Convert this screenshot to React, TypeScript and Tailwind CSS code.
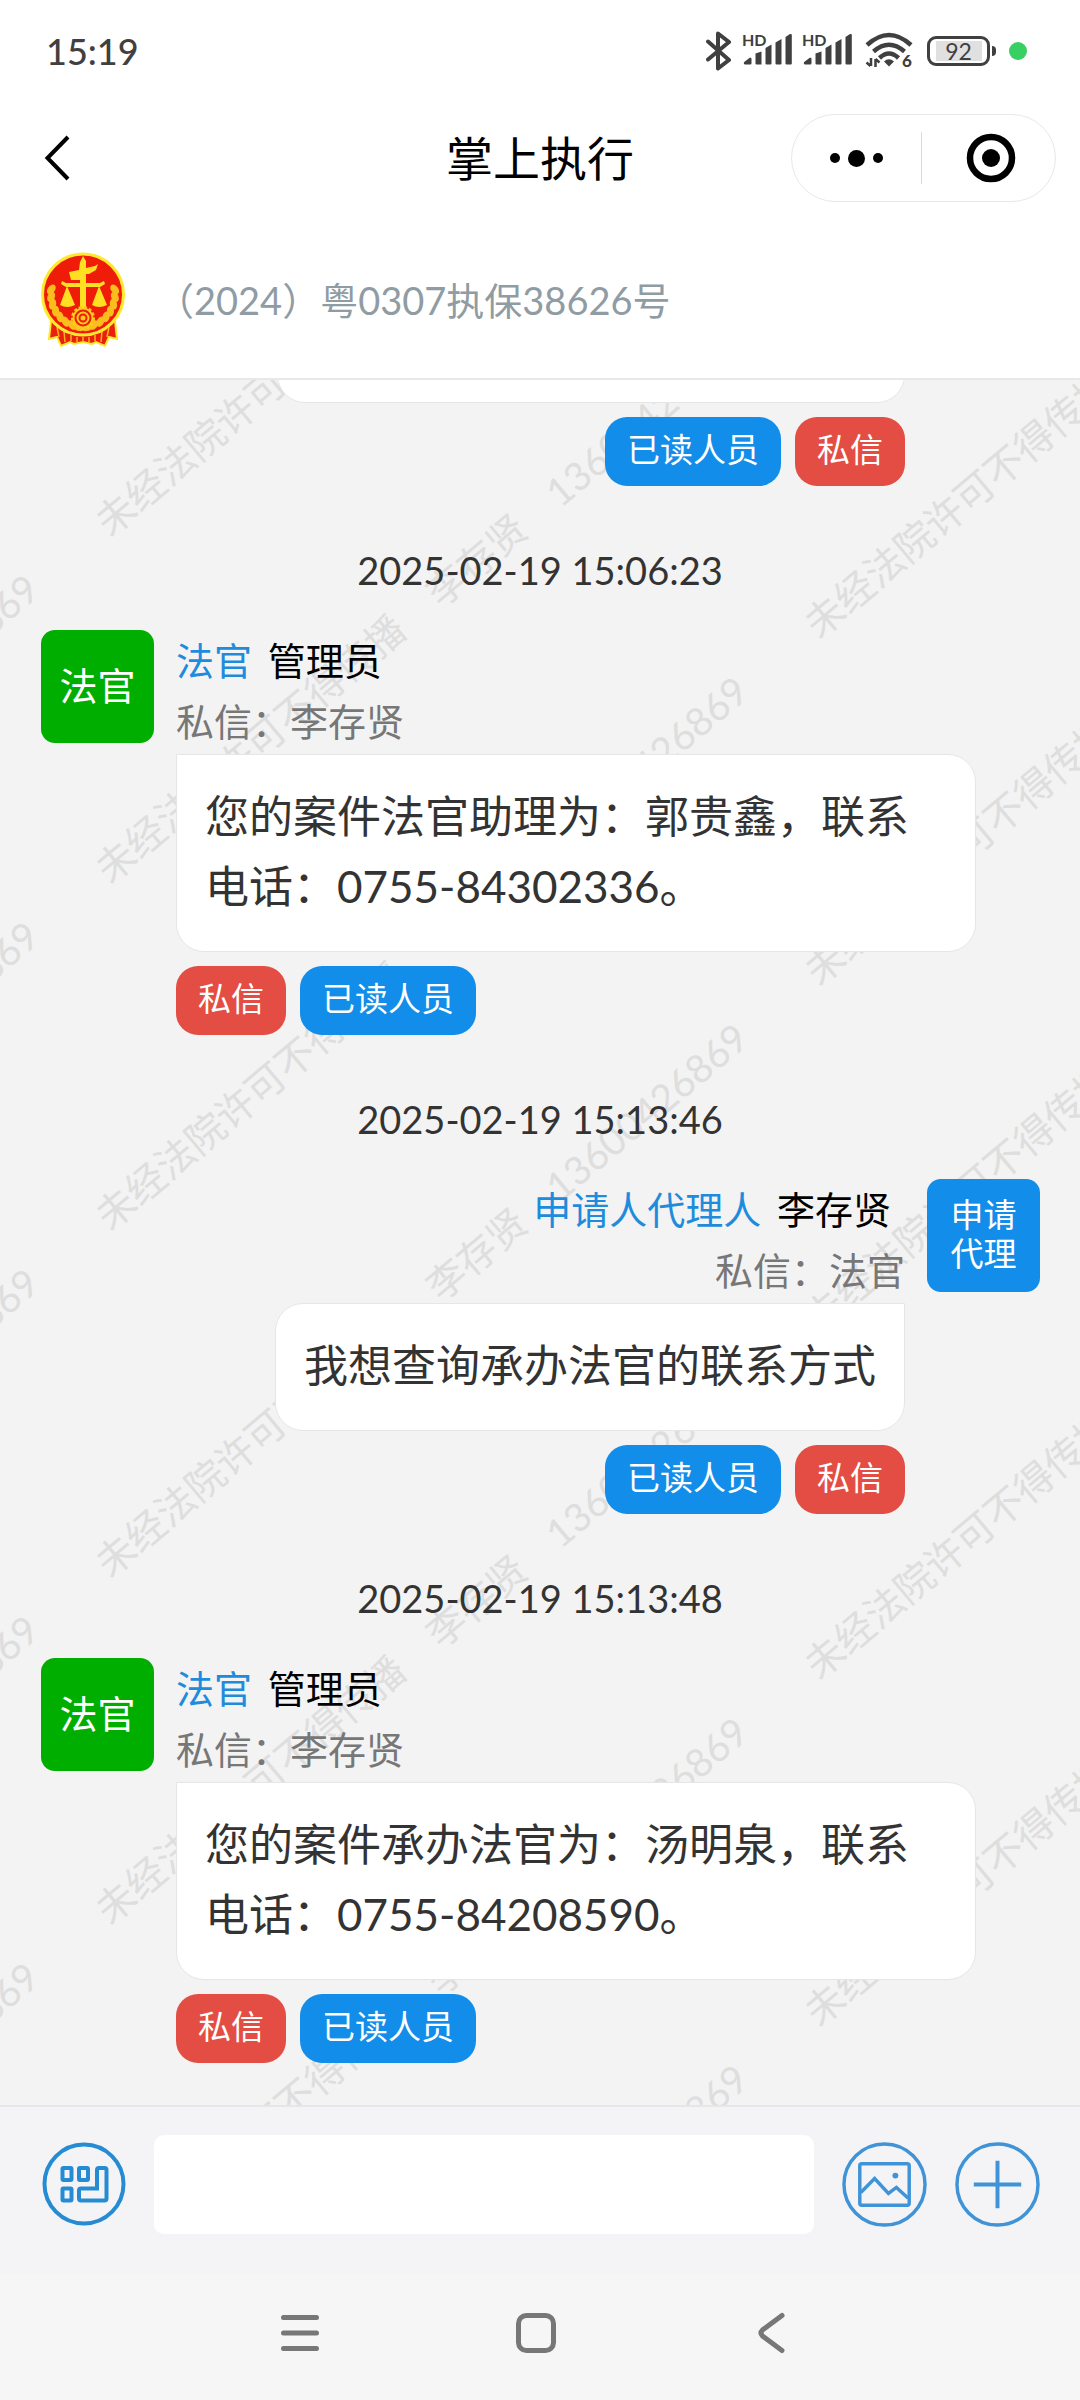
import React from "react";

const FONT = "font-['Lato','Noto_Sans_CJK_SC',sans-serif]";

const WATERMARKS = [
  { text: "未经法院许可不得传播", x: 110, y: 158, columns: [0, 1] },
  { text: "李存贤　13600426869", x: 441, y: 229, columns: [-1, 0] },
].flatMap(({ text, x, y, columns }) =>
  columns.flatMap((column) =>
    Array.from({ length: 8 }, (_, i) => ({
      text,
      x: x + column * 709,
      y: y + column * 102 + (i - 1) * 347,
    })).filter((mark) => mark.y > 0 && mark.y < 2000),
  ),
);

function Watermark() {
  return (
    <svg aria-hidden="true" className="pointer-events-none absolute inset-0 h-full w-full" fill="#dedede" fontSize="39">
      {WATERMARKS.map(({ text, x, y }) => (
        <text key={`${x}:${y}`} transform={`translate(${x} ${y}) rotate(-40)`}>{text}</text>
      ))}
    </svg>
  );
}

function Signal() {
  return (
    <svg viewBox="0 0 52 40" className="h-10 w-[52px]" fill="#404040">
      <text x="0" y="15" fontSize="16" fontWeight="700" fontFamily="Lato">HD</text>
      <path d="M3 33.500a1.500 1.500 0 0 1-.8-2.500l5.500-4.200a1.200 1.200 0 0 1 1.800 1v4.500a1.200 1.200 0 0 1-1.200 1.200z" />
      <path d="M13.500 22.500l6-2v13h-5a1 1 0 0 1-1-1z" />
      <path d="M23.500 17l6-3.500v19a1 1 0 0 1-1 1h-4a1 1 0 0 1-1-1z" />
      <path d="M33.500 11.500l6-3.500v24.500a1 1 0 0 1-1 1h-4a1 1 0 0 1-1-1z" />
      <path d="M43.500 6l4.500-3q1.800-.5 1.800 1v28.500a1 1 0 0 1-1 1h-4.300a1 1 0 0 1-1-1z" />
    </svg>
  );
}

function StatusBar() {
  return (
    <div className="flex h-[104px] items-center justify-between pr-[53px] pb-[2px] pl-[46px] text-[#404040]">
      <span className="text-[36px] leading-[40px] font-medium">15:19</span>
      <div className="flex items-center">
        <svg viewBox="0 0 26 40" className="mr-[10px] h-10 w-[26px]" fill="none" stroke="#404040" strokeWidth="4" strokeLinecap="round" strokeLinejoin="round">
          <path d="M2 10.500l21 18.500-11 8.500v-35l11 8.500L2 28.500" />
        </svg>
        <Signal />
        <span className="w-2" />
        <Signal />
        <svg viewBox="0 0 48 40" className="ml-[11px] h-10 w-12" fill="none" stroke="#404040" strokeWidth="4.500">
          <path d="M2 14q22-20 44 0" />
          <path d="M8.500 20.500q15.500-13.500 31 0" />
          <path d="M14.500 27q9.500-9 19 0" />
          <path d="M24 35.500l-5-5q5-4.500 10 0z" fill="#404040" stroke="none" />
          <path d="M6 27v8M1.500 31.500l4 3.500M10.500 36v-8M10.500 28l4 3.500" strokeWidth="2.500" />
          <text x="37" y="36" fontSize="17" fontWeight="900" fontFamily="Lato" fill="#404040" stroke="none">6</text>
        </svg>
        <div className="ml-[14px] flex items-center gap-[2px]">
          <div className="flex h-[30px] w-[63px] items-center justify-center rounded-[9px] border-[3px] border-[#404040]">
            <span className="h-[20px] w-[46px] bg-[#e0e0e0] text-center text-[23px] leading-[20px]">92</span>
          </div>
          <div className="h-[10px] w-1 rounded-r bg-[#404040]" />
        </div>
        <span className="ml-[13px] h-[18px] w-[18px] rounded-full bg-[#38cf63]" />
      </div>
    </div>
  );
}

function TitleBar() {
  return (
    <div className="grid h-[108px] grid-cols-[1fr_auto_1fr] items-center px-6">
      <button type="button" aria-label="返回" className="ml-4 h-12 w-8">
        <svg viewBox="0 0 32 48" className="h-12 w-8" fill="none" stroke="#000" strokeWidth="4">
          <path d="M28 3L7.500 24 28 45" />
        </svg>
      </button>
      <h1 className="text-[47px] leading-[60px] text-black">掌上执行</h1>
      <div className="flex h-[88px] w-[265px] items-center justify-self-end rounded-full border border-[#e8e8e8]">
        <button type="button" aria-label="更多" className="flex h-full flex-1 items-center justify-center gap-2">
          <span className="h-[10px] w-[10px] rounded-full bg-black" />
          <span className="h-[17px] w-[17px] rounded-full bg-black" />
          <span className="h-[10px] w-[10px] rounded-full bg-black" />
        </button>
        <span className="h-[52px] w-px bg-[#dadada]" />
        <button type="button" aria-label="关闭" className="flex h-full flex-1 items-center justify-center pl-1">
          <svg viewBox="0 0 50 50" className="h-[50px] w-[50px]">
            <circle cx="25" cy="25" r="21" fill="none" stroke="#000" strokeWidth="6.500" />
            <circle cx="25" cy="25" r="9" />
          </svg>
        </button>
      </div>
    </div>
  );
}

const GRAINS = Array.from({ length: 9 }, (_, i) => {
  const angle = 188 - i * 13;
  const a = (angle * Math.PI) / 180;
  return { x: 43 + 32 * Math.cos(a), y: 43 + 33 * Math.sin(a), angle };
});

function Emblem() {
  return (
    <svg viewBox="0 0 86 98" className="h-[98px] w-[86px]" role="img" aria-label="法院徽章">
      <path d="M11 70L9 88l8-2 4 9 9-4 4 2 9-2 9 2 4-2 9 4 4-9 8 2-2-18z" fill="#e8200c" stroke="#ffe92e" strokeWidth="2" />
      <path d="M17 76l2 10M24 80l1 11M31 84v6M37 86v5M43 86v5M49 86v5M55 84v6M62 80l-1 11M69 76l-2 10" stroke="#ffb020" strokeWidth="1.500" />
      <circle cx="43" cy="43.500" r="40.500" fill="#ee1c08" stroke="#ffe92e" strokeWidth="3" />
      <g fill="#f9bd1e">
        {GRAINS.map((g) => (
          <g key={g.angle}>
            <ellipse cx={g.x} cy={g.y} rx="5.500" ry="3.600" transform={`rotate(${g.angle - 60} ${g.x} ${g.y})`} />
            <ellipse cx={86 - g.x} cy={g.y} rx="5.500" ry="3.600" transform={`rotate(${240 - g.angle} ${86 - g.x} ${g.y})`} />
          </g>
        ))}
      </g>
      <g fill="#ffdf22">
        <path d="M40 62V29H31l-2-8 10-2 1-8 3-6 3 5v7l9-2 3-2-2 6-7 4h-3v39z" />
        <path d="M22 30l4 2h34l4-2 1 3-5 3H26l-5-3z" />
        <path d="M27 35l8 19q-8 4-15 0zM59 35l8 19q-8 4-15 0z" />
      </g>
      <circle cx="43" cy="67" r="10.500" fill="#ffcb1e" stroke="#ffcb1e" strokeWidth="3" strokeDasharray="3 2" />
      <circle cx="43" cy="67" r="7.500" fill="none" stroke="#ee1c08" strokeWidth="2" />
      <circle cx="43" cy="67" r="3.500" fill="none" stroke="#ee1c08" strokeWidth="2" />
    </svg>
  );
}

function PrivateButton() {
  return (
    <button type="button" className="h-[69px] rounded-[22px] bg-[#e34d43] px-[22px] pb-1 text-[33px] text-white">私信</button>
  );
}

function ReadersButton() {
  return (
    <button type="button" className="h-[69px] rounded-[22px] bg-[#128de9] px-[22px] pb-1 text-[33px] text-white">已读人员</button>
  );
}

function Stamp({ children }: { children: string }) {
  return (
    <time className="mt-[54px] mb-[30px] block text-center text-[38px] leading-[60px] text-[#333]">{children}</time>
  );
}

function JudgeMessage({ children }: { children: string }) {
  return (
    <article className="flex items-start gap-[22px] pr-[104px] pl-[41px]">
      <div className="flex h-[113px] w-[113px] shrink-0 items-center justify-center rounded-[14px] bg-[#00ae00] pb-[2px] text-[38px] text-white">法官</div>
      <div className="min-w-0">
        <p className="text-[38px] leading-[60px] text-black"><span className="text-[#1f8bdc]">法官</span> <span className="ml-[6px]">管理员</span></p>
        <p className="text-[38px] leading-[62px] text-[#777]">私信：李存贤</p>
        <div className="mt-[2px] rounded-[28px] rounded-tl-none border border-[#e6e6e6] bg-white px-7 pt-[26px] pb-[30px] text-[44px] leading-[70px] text-[#333]">{children}</div>
        <div className="mt-[14px] flex gap-[14px]">
          <PrivateButton />
          <ReadersButton />
        </div>
      </div>
    </article>
  );
}

function AgentMessage({ children }: { children: string }) {
  return (
    <article className="flex items-start justify-end gap-[22px] pr-[40px] pl-[104px]">
      <div className="flex min-w-0 flex-col items-end">
        <p className="mr-[14px] text-[38px] leading-[60px] text-black"><span className="text-[#1f8bdc]">申请人代理人</span> <span className="ml-[6px]">李存贤</span></p>
        <p className="text-[38px] leading-[62px] text-[#777]">私信：法官</p>
        <div className="mt-[2px] rounded-[28px] rounded-tr-none border border-[#e6e6e6] bg-white px-7 pt-[26px] pb-[30px] text-[44px] leading-[70px] text-[#333]">{children}</div>
        <div className="mt-[14px] flex gap-[14px]">
          <ReadersButton />
          <PrivateButton />
        </div>
      </div>
      <div className="flex h-[113px] w-[113px] shrink-0 items-center justify-center rounded-[14px] bg-[#128de9] pb-1 text-center text-[33px] leading-[39px] text-white">申请<br />代理</div>
    </article>
  );
}

export default function App() {
  return (
    <div className={`flex h-screen flex-col overflow-hidden bg-white ${FONT}`}>
      <header className="shrink-0 border-b-2 border-[#e8e8e8]">
        <StatusBar />
        <TitleBar />
        <div className="flex h-[166px] items-center gap-[30px] px-10 pt-[10px]">
          <Emblem />
          <p className="text-[38px] leading-[60px] text-[#8f9ca3]">（2024）粤0307执保38626号</p>
        </div>
      </header>

      <main className="relative min-h-0 flex-1 overflow-hidden bg-[#f3f3f3]">
        <Watermark />
        <div className="relative flex h-full flex-col justify-end pb-[42px]">
          <div className="flex flex-col items-end pr-[175px]">
            <div className="h-32 w-[628px] max-w-full rounded-[28px] rounded-tr-none border border-[#e6e6e6] bg-white" />
            <div className="mt-[14px] flex gap-[14px]">
              <ReadersButton />
              <PrivateButton />
            </div>
          </div>
          <Stamp>2025-02-19 15:06:23</Stamp>
          <JudgeMessage>您的案件法官助理为：郭贵鑫，联系电话：0755-84302336。</JudgeMessage>
          <Stamp>2025-02-19 15:13:46</Stamp>
          <AgentMessage>我想查询承办法官的联系方式</AgentMessage>
          <Stamp>2025-02-19 15:13:48</Stamp>
          <JudgeMessage>您的案件承办法官为：汤明泉，联系电话：0755-84208590。</JudgeMessage>
        </div>
      </main>

      <footer className="shrink-0">
        <form className="flex h-[168px] items-center gap-7 border-t-2 border-[#e6e6e8] bg-[#f4f4f7] pr-10 pb-3 pl-[42px]">
          <button type="button" aria-label="常用语">
            <svg viewBox="0 0 84 84" className="h-[84px] w-[84px]" fill="none" stroke="#258bd3" strokeWidth="4">
              <circle cx="42" cy="42" r="39.500" />
              <rect x="20.500" y="26" width="9" height="12" rx="1" />
              <rect x="37" y="26" width="9" height="12" rx="1" />
              <rect x="20.500" y="46.500" width="9" height="12" rx="1" />
              <path d="M57 26h5.500q2 0 2 2v28.500q0 2-2 2H39q-2 0-2-2v-8q0-2 2-2h16V28q0-2 2-2z" />
            </svg>
          </button>
          <input type="text" aria-label="消息" className="h-[99px] min-w-0 flex-1 rounded-[10px] bg-white px-6 text-[44px] text-[#333] outline-none" />
          <button type="button" aria-label="发送图片">
            <svg viewBox="0 0 86 86" className="h-[85px] w-[85px]" fill="none" stroke="#3f93d6" strokeWidth="3.500">
              <circle cx="43" cy="43" r="41" />
              <rect x="18" y="22" width="50" height="42" rx="2" />
              <path d="M19 51l14-14 14 15 8-6 12 11" />
              <circle cx="54" cy="34" r="3" fill="#3f93d6" stroke="none" />
            </svg>
          </button>
          <button type="button" aria-label="更多功能">
            <svg viewBox="0 0 86 86" className="h-[85px] w-[85px]" fill="none" stroke="#3f93d6" strokeWidth="3.500">
              <circle cx="43" cy="43" r="41" />
              <path d="M19 43h48M43 19v48" strokeWidth="4" />
            </svg>
          </button>
        </form>
        <nav className="flex h-[127px] items-center justify-center gap-[188px] bg-[#f6f6f6] pr-2 pb-2">
          <button type="button" aria-label="最近任务">
            <svg viewBox="0 0 48 48" className="h-12 w-12" fill="none" stroke="#777" strokeWidth="5" strokeLinecap="round">
              <path d="M7.500 8.500h33M7.500 24h33M7.500 39.500h33" />
            </svg>
          </button>
          <button type="button" aria-label="主屏幕">
            <svg viewBox="0 0 48 48" className="h-12 w-12" fill="none" stroke="#777" strokeWidth="5">
              <rect x="6.500" y="6.500" width="35" height="35" rx="8" />
            </svg>
          </button>
          <button type="button" aria-label="系统返回">
            <svg viewBox="0 0 48 48" className="h-12 w-12" fill="none" stroke="#777" strokeWidth="5" strokeLinecap="round">
              <path d="M34 6.500L14.500 21q-3 3 0 6L34 41.500" />
            </svg>
          </button>
        </nav>
      </footer>
    </div>
  );
}
